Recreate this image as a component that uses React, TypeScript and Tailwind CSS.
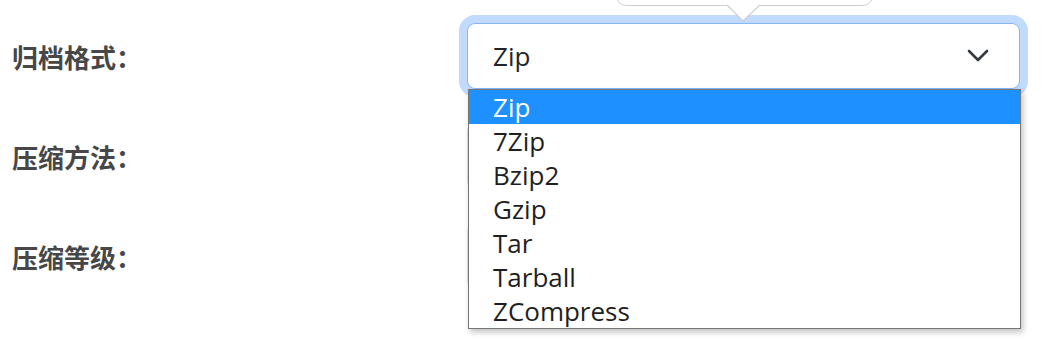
import React from 'react';

const options = ['Zip', '7Zip', 'Bzip2', 'Gzip', 'Tar', 'Tarball', 'ZCompress'];

// only the first select is visible, the other two sit behind the open list
const rows = [
  { label: '归档格式：', value: 'Zip', focused: true },
  { label: '压缩方法：', value: '', focused: false },
  { label: '压缩等级：', value: '', focused: false },
];

const Chevron = () => (
  <svg width="22" height="14" viewBox="0 0 22 14" fill="none">
    <path d="M2 2l9 9 9-9" stroke="#343a40" strokeWidth="2.6" strokeLinecap="round" strokeLinejoin="round" />
  </svg>
);

export default function App() {
  return (
    <div
      className="relative w-[1042px] h-[341px] overflow-hidden bg-white"
      style={{ fontFamily: '"Open Sans", "Noto Sans CJK SC", sans-serif' }}
    >
      {/* tooltip poking in from above */}
      <div className="absolute left-[616px] top-[-40px] w-[257px] h-[46px] rounded-[10px] border border-[#cfcfcf] bg-white" />
      <svg className="absolute left-[724px] top-[4px] z-10" width="40" height="19" viewBox="0 0 40 19">
        <polygon points="2,0 19,17 37,0" fill="#ffffff" />
        <polyline points="3,1 19,17 36,1" fill="none" stroke="#cfcfcf" strokeWidth="1.2" />
      </svg>

      <div className="flex flex-col gap-[34px] pt-[23px] pl-3 pr-[22px]">
        {rows.map((r) => (
          <div key={r.label} className="flex items-center h-[66px]">
            <div
              className="w-[455px] text-[26px] font-bold text-[#474747]"
              style={{ fontFamily: '"Noto Sans CJK SC", sans-serif' }}
            >
              {r.label}
            </div>
            <div
              className={`flex-1 h-[66px] flex items-center justify-between pl-[25px] pr-[30px] rounded-[8px] border bg-white ${
                r.focused ? 'border-[#86b7fe] shadow-[0_0_0_8px_#c2dafd]' : 'border-[#dee2e6]'
              }`}
            >
              <span className="text-[26px] text-[#212529]">{r.value}</span>
              <Chevron />
            </div>
          </div>
        ))}
      </div>

      {/* open listbox */}
      <div className="absolute left-[468px] top-[89px] w-[553px] border border-[#767676] bg-white shadow-[2px_3px_6px_rgba(0,0,0,0.25)] z-20">
        {options.map((o, i) => (
          <div
            key={o}
            className={`h-[34px] leading-[34px] pl-[24px] text-[26px] ${
              i === 0 ? 'bg-[#1e90ff] text-white' : 'text-[#1f1f1f]'
            }`}
          >
            {o}
          </div>
        ))}
      </div>
    </div>
  );
}
